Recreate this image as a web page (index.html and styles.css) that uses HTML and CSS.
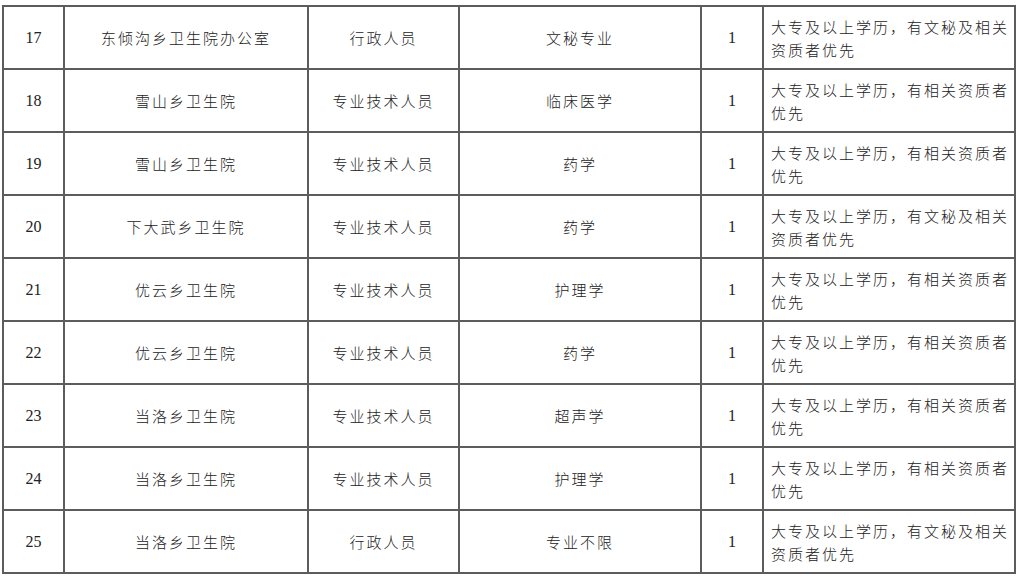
FILE: index.html
```html
<!DOCTYPE html>
<html lang="zh">
<head>
<meta charset="utf-8">
<link rel="stylesheet" href="styles.css">
</head>
<body>
<table class="grid">
<colgroup>
<col class="c-no"><col class="c-unit"><col class="c-type"><col class="c-major"><col class="c-count"><col class="c-req">
</colgroup>
<tbody>
<tr><td class="num">17</td><td>东倾沟乡卫生院办公室</td><td>行政人员</td><td>文秘专业</td><td class="num">1</td><td class="req">大专及以上学历，有文秘及相关<br>资质者优先</td></tr>
<tr><td class="num">18</td><td>雪山乡卫生院</td><td>专业技术人员</td><td>临床医学</td><td class="num">1</td><td class="req">大专及以上学历，有相关资质者<br>优先</td></tr>
<tr><td class="num">19</td><td>雪山乡卫生院</td><td>专业技术人员</td><td>药学</td><td class="num">1</td><td class="req">大专及以上学历，有相关资质者<br>优先</td></tr>
<tr><td class="num">20</td><td>下大武乡卫生院</td><td>专业技术人员</td><td>药学</td><td class="num">1</td><td class="req">大专及以上学历，有文秘及相关<br>资质者优先</td></tr>
<tr><td class="num">21</td><td>优云乡卫生院</td><td>专业技术人员</td><td>护理学</td><td class="num">1</td><td class="req">大专及以上学历，有相关资质者<br>优先</td></tr>
<tr><td class="num">22</td><td>优云乡卫生院</td><td>专业技术人员</td><td>药学</td><td class="num">1</td><td class="req">大专及以上学历，有相关资质者<br>优先</td></tr>
<tr><td class="num">23</td><td>当洛乡卫生院</td><td>专业技术人员</td><td>超声学</td><td class="num">1</td><td class="req">大专及以上学历，有相关资质者<br>优先</td></tr>
<tr><td class="num">24</td><td>当洛乡卫生院</td><td>专业技术人员</td><td>护理学</td><td class="num">1</td><td class="req">大专及以上学历，有相关资质者<br>优先</td></tr>
<tr><td class="num">25</td><td>当洛乡卫生院</td><td>行政人员</td><td>专业不限</td><td class="num">1</td><td class="req">大专及以上学历，有文秘及相关<br>资质者优先</td></tr>
</tbody>
</table>
</body>
</html>
```
FILE: styles.css
```css
html, body {
  margin: 0;
  padding: 0;
  background: #ffffff;
}
body {
  padding: 5px 0 0 2px;
  font-family: "Noto Sans CJK SC", "Liberation Serif", serif;
  color: #222222;
}
.grid {
  border-collapse: collapse;
  table-layout: fixed;
  width: 1014px;
}
.c-no { width: 61px; }
.c-unit { width: 244px; }
.c-type { width: 151px; }
.c-major { width: 242px; }
.c-count { width: 62px; }
.c-req { width: 252px; }
.grid td {
  border: 2px solid #5c5c5c;
  height: 61px;
  padding: 0;
  text-align: center;
  vertical-align: middle;
  font-size: 15px;
  letter-spacing: 2px;
  font-weight: 300;
  line-height: 23px;
}
.grid td.num {
  font-family: "Liberation Serif", serif;
  font-size: 16px;
  letter-spacing: 0;
  font-weight: 400;
}
.grid td.req {
  text-align: left;
  padding-left: 7px;
  white-space: nowrap;
}
```
